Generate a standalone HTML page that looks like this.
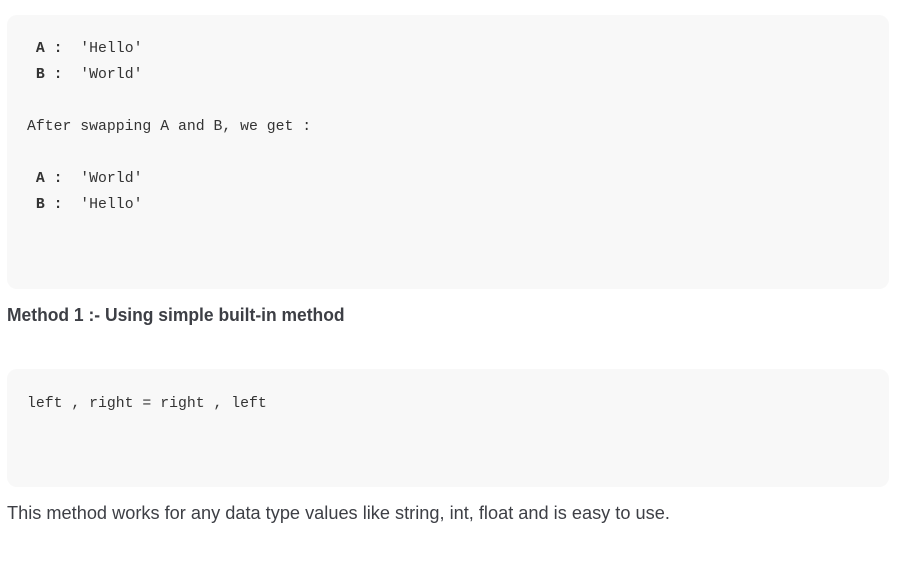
<!DOCTYPE html>
<html><head><style>
body{margin:0;background:#fff;width:909px;height:562px;position:relative;overflow:hidden;font-family:"Liberation Sans",sans-serif;color:#3d3f45}
.box{position:absolute;left:7px;width:882px;background:#f8f8f8;border-radius:10px}
.code{position:absolute;font-family:"Liberation Mono",monospace;font-size:14.8px;color:#333;white-space:pre;line-height:26px}
b{font-weight:bold}
.h{position:absolute;left:7px;top:305px;font-weight:bold;font-size:18px;color:#3d3f45;transform:scaleX(0.97);transform-origin:left;white-space:nowrap}
.p{position:absolute;left:7px;top:503px;font-size:18px;color:#3d3f45;white-space:nowrap;transform:scaleX(1.01);transform-origin:left}
</style></head><body>
<div class="box" style="top:15px;height:274px"></div>
<div class="code" style="left:27px;top:36px"> <b>A :</b>  'Hello'
 <b>B :</b>  'World'

After swapping A and B, we get :

 <b>A :</b>  'World'
 <b>B :</b>  'Hello'</div>
<div class="h">Method 1 :- Using simple built-in method</div>
<div class="box" style="top:369px;height:118px"></div>
<div class="code" style="left:27px;top:391px">left , right = right , left</div>
<div class="p">This method works for any data type values like string, int, float and is easy to use.</div>
</body></html>
